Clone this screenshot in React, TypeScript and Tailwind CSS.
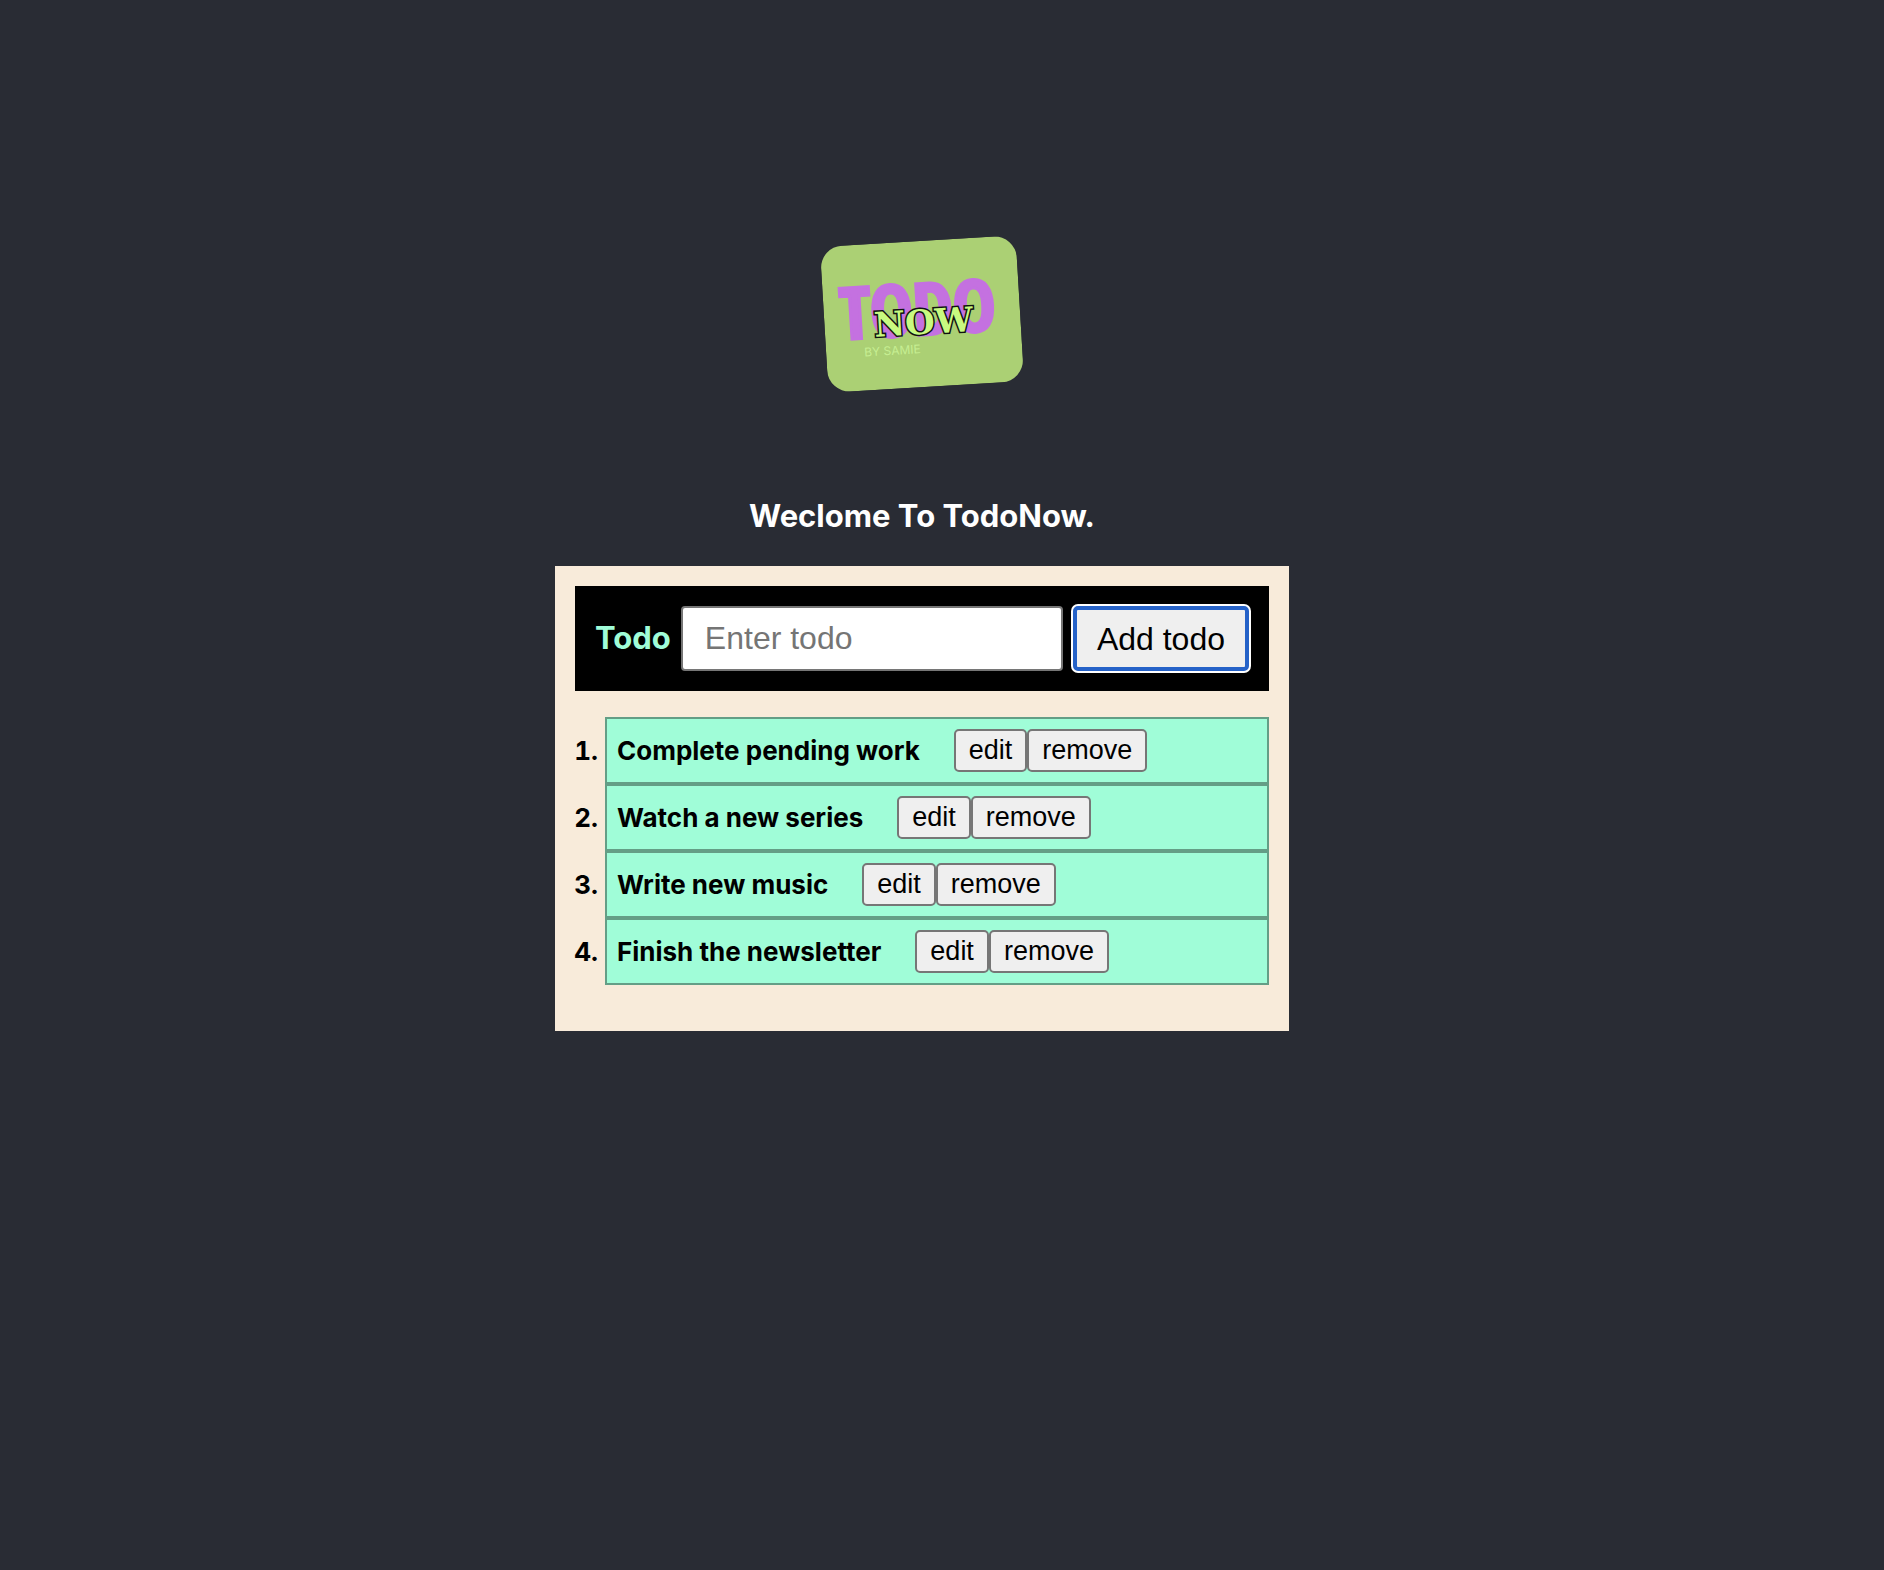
const todos = [
  'Complete pending work',
  'Watch a new series',
  'Write new music',
  'Finish the newsletter',
];

function Logo() {
  return (
    <svg
      className="h-[146px] w-[196px] rotate-[-3.4deg]"
      viewBox="0 0 196 146"
      role="img"
      aria-label="Todo Now by Samie"
    >
      <rect width="196" height="146" rx="22" fill="#abd074" />
      <text x="38" y="112" fontSize="12" fill="#c6ee92" className="font-['Inter',sans-serif]">
        BY SAMIE
      </text>
      <text
        x="94"
        y="94"
        textAnchor="middle"
        fontSize="72"
        fontWeight="700"
        fill="#c471e0"
        stroke="#c471e0"
        strokeWidth="3"
        className="font-['Noto_Sans_ExtraCondensed','Open_Sans_Condensed','Roboto_Condensed','Roboto',sans-serif]"
      >
        TODO
      </text>
      <text
        x="99"
        y="93"
        textAnchor="middle"
        fontSize="34"
        fontWeight="700"
        fill="#c8fa80"
        stroke="#111111"
        strokeWidth="3"
        paintOrder="stroke"
        className="font-['DejaVu_Serif',serif]"
      >
        NOW
      </text>
    </svg>
  );
}

function ItemButton({ label }: { label: string }) {
  return (
    <button
      type="button"
      className="h-[43px] rounded-[5px] border-2 border-[#767676] bg-[#efefef] px-[13px] font-['Liberation_Sans',sans-serif] text-[27px] leading-[39px] font-normal text-black"
    >
      {label}
    </button>
  );
}

export default function App() {
  return (
    <main className="flex min-h-screen flex-col items-center bg-[#292c34] pt-[241px] pr-10 font-['Inter',sans-serif]">
      <Logo />
      <h1 className="mt-[109px] mb-[30px] text-[31px] leading-10 font-bold text-white">
        Weclome To TodoNow.
      </h1>
      <section className="w-full max-w-[734px] bg-[#f8ebda] px-5 pt-5 pb-[46px]">
        <form
          className="flex items-center gap-[10px] bg-black p-5 text-[32px]"
          onSubmit={(e) => e.preventDefault()}
        >
          <label htmlFor="todo" className="text-[31px] font-bold text-[#a0fdd8]">
            Todo
          </label>
          <input
            id="todo"
            type="text"
            placeholder="Enter todo"
            className="h-[65px] min-w-0 flex-1 rounded-[4px] border-2 border-[#767676] bg-white px-[22px] font-['Liberation_Sans',sans-serif] text-black placeholder:text-[#757575]"
          />
          <button
            type="submit"
            className="h-[65px] rounded-[5px] border-4 border-[#2562c8] bg-[#efefef] px-5 font-['Liberation_Sans',sans-serif] text-black ring-2 ring-white"
          >
            Add todo
          </button>
        </form>
        <ol className="mt-[26px] list-decimal pl-[30px] text-[26px] font-bold text-black">
          {todos.map((todo) => (
            <li key={todo} className="border-2 border-[#649e86] bg-[#a0fdd8] p-[10px]">
              <div className="flex items-center">
                <span className="mr-[34px]">{todo}</span>
                <ItemButton label="edit" />
                <ItemButton label="remove" />
              </div>
            </li>
          ))}
        </ol>
      </section>
    </main>
  );
}
